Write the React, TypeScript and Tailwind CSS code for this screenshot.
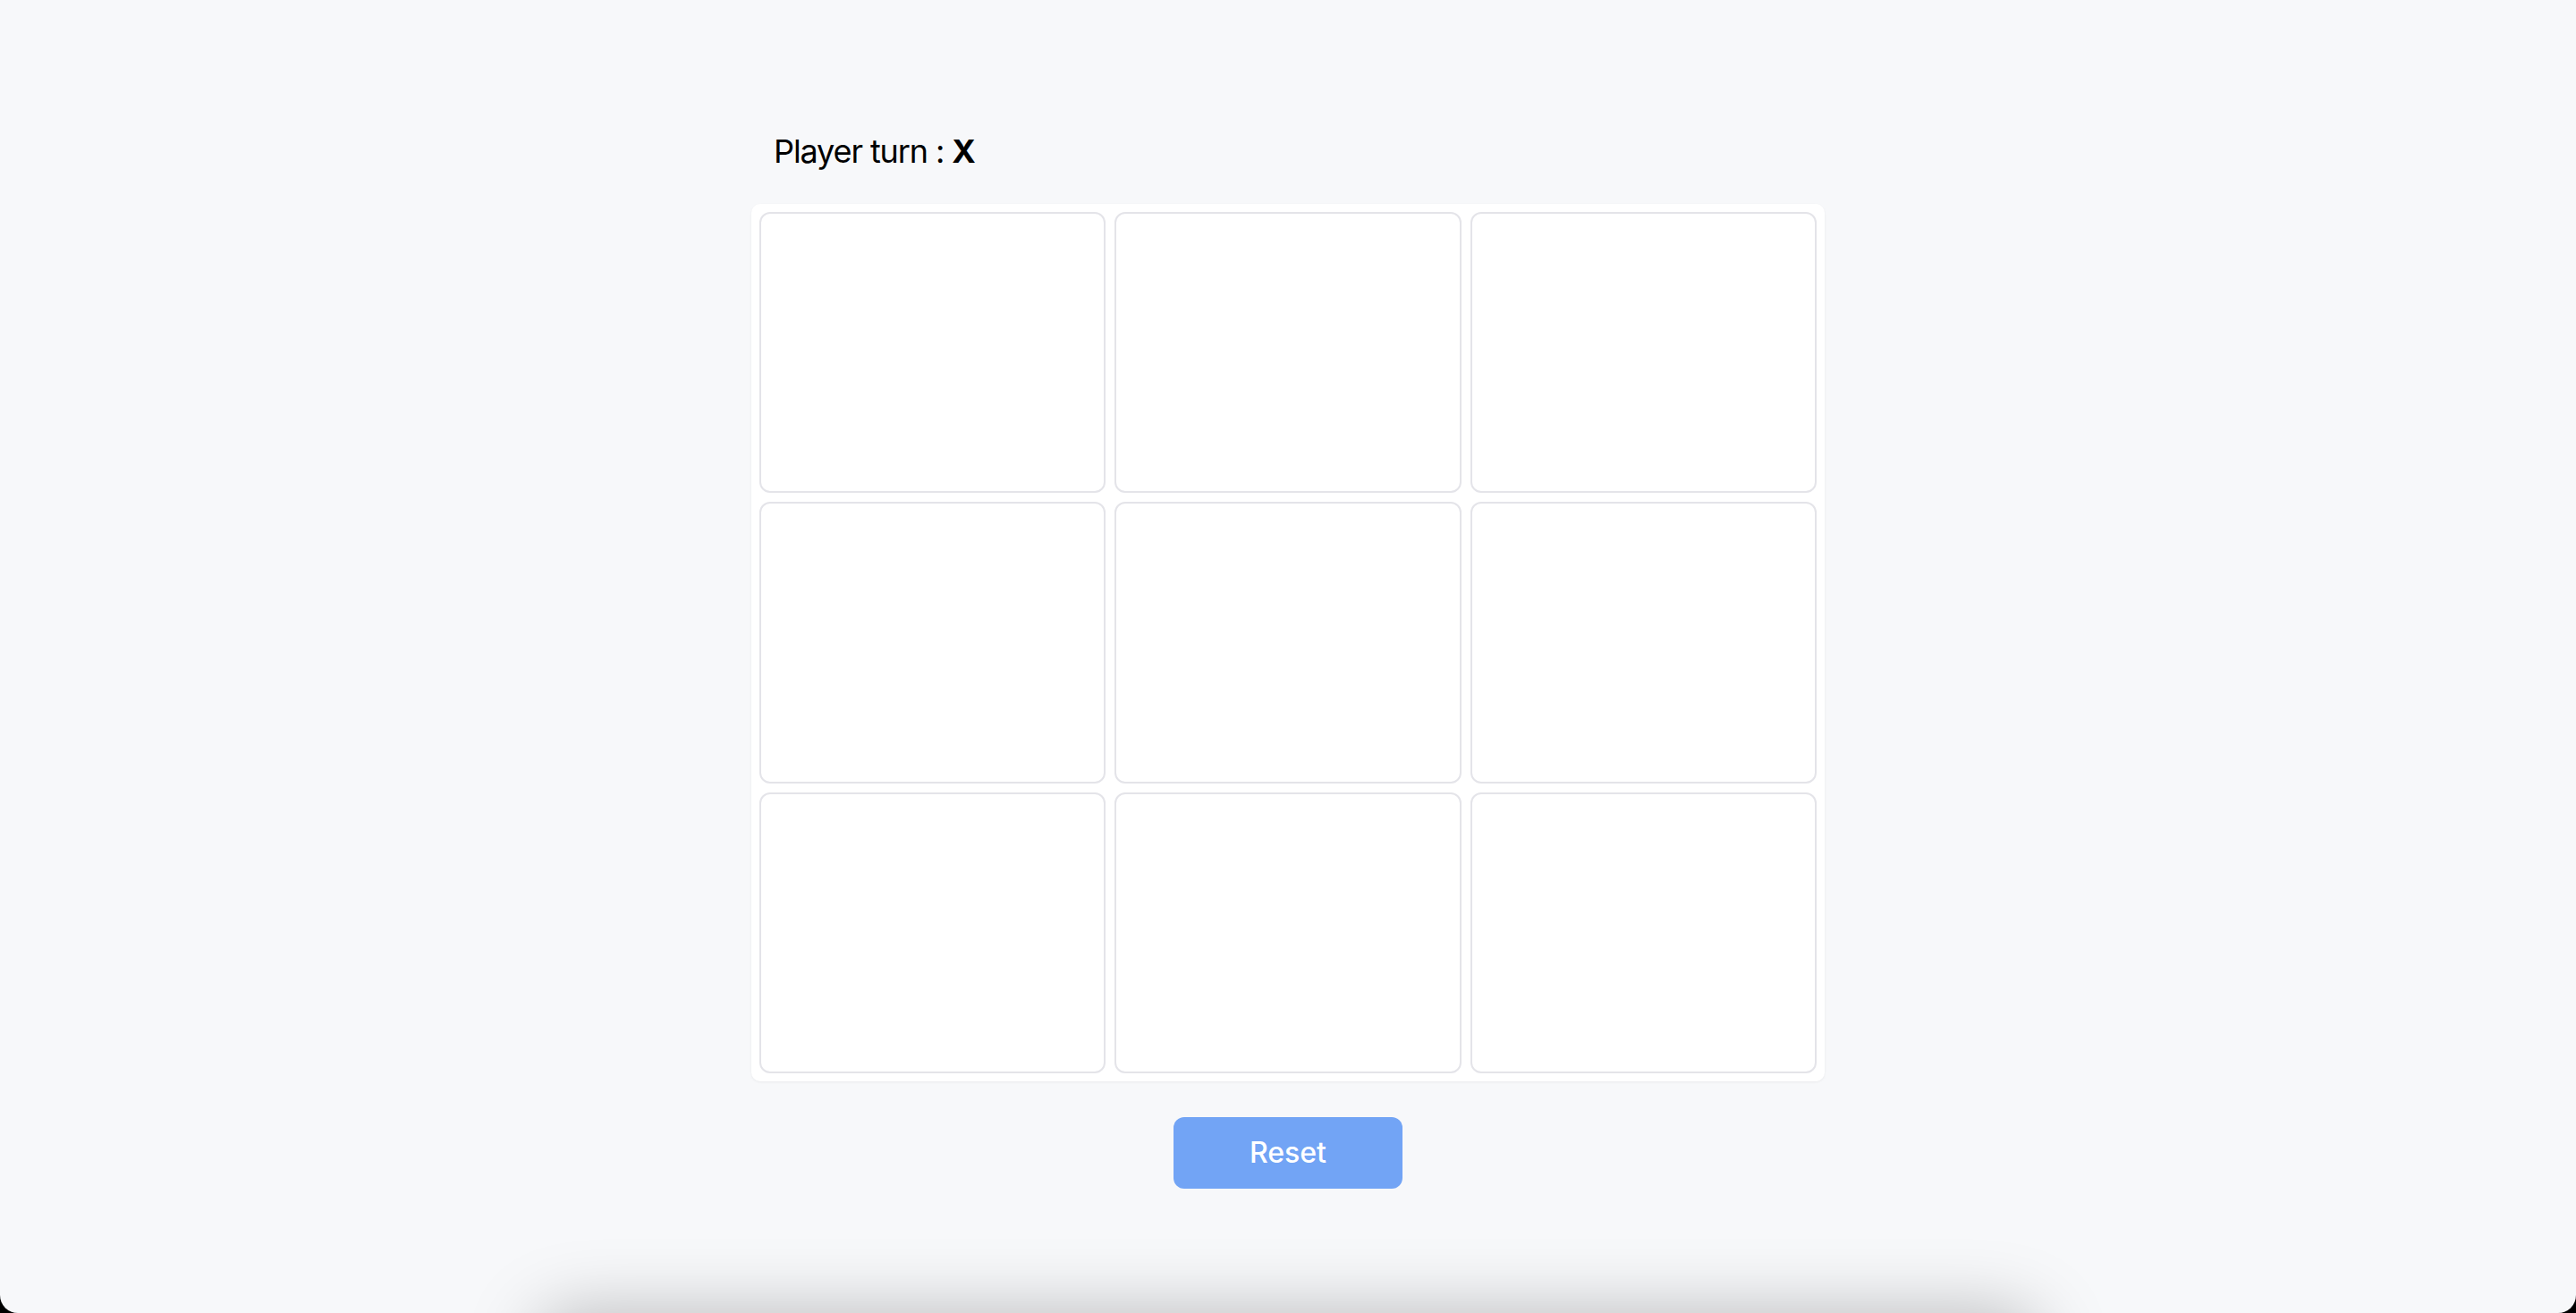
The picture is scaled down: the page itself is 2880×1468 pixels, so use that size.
export default function App() {
  const cells = Array.from({ length: 9 });

  return (
    <div className="h-screen w-full bg-black" style={{ fontFamily: 'Inter, "Noto Sans", sans-serif' }}>
      <div className="relative h-full w-full overflow-hidden rounded-b-[20px] bg-[#f7f8fa]">
        {/* game column */}
        <div className="mx-auto flex w-[1200px] flex-col items-center pt-[142px]">
          <div className="w-full pl-[25px] text-[36px] leading-[54px] tracking-[-1.1px] text-black">
            Player turn : <span className="font-bold">X</span>
          </div>

          <div className="mt-[32px] grid h-[981px] w-full grid-cols-3 grid-rows-3 gap-[10px] rounded-[10px] bg-white p-[9px] shadow-[0_1px_3px_rgba(0,0,0,0.06)]">
            {cells.map((_, i) => (
              <button
                key={i}
                className="rounded-[12px] border-2 border-[#e4e4e9] bg-white"
              ></button>
            ))}
          </div>

          <button className="mt-[40px] h-[80px] w-[256px] rounded-[12px] bg-[#72a4f5] text-[32px] font-medium text-white">
            Reset
          </button>
        </div>

        {/* shadow of the element sitting below the fold */}
        <div className="absolute left-[600px] top-[1468px] h-[100px] w-[1680px] rounded-[40px] shadow-[0_0_80px_0_rgba(0,0,0,0.26)]"></div>
      </div>
    </div>
  );
}
